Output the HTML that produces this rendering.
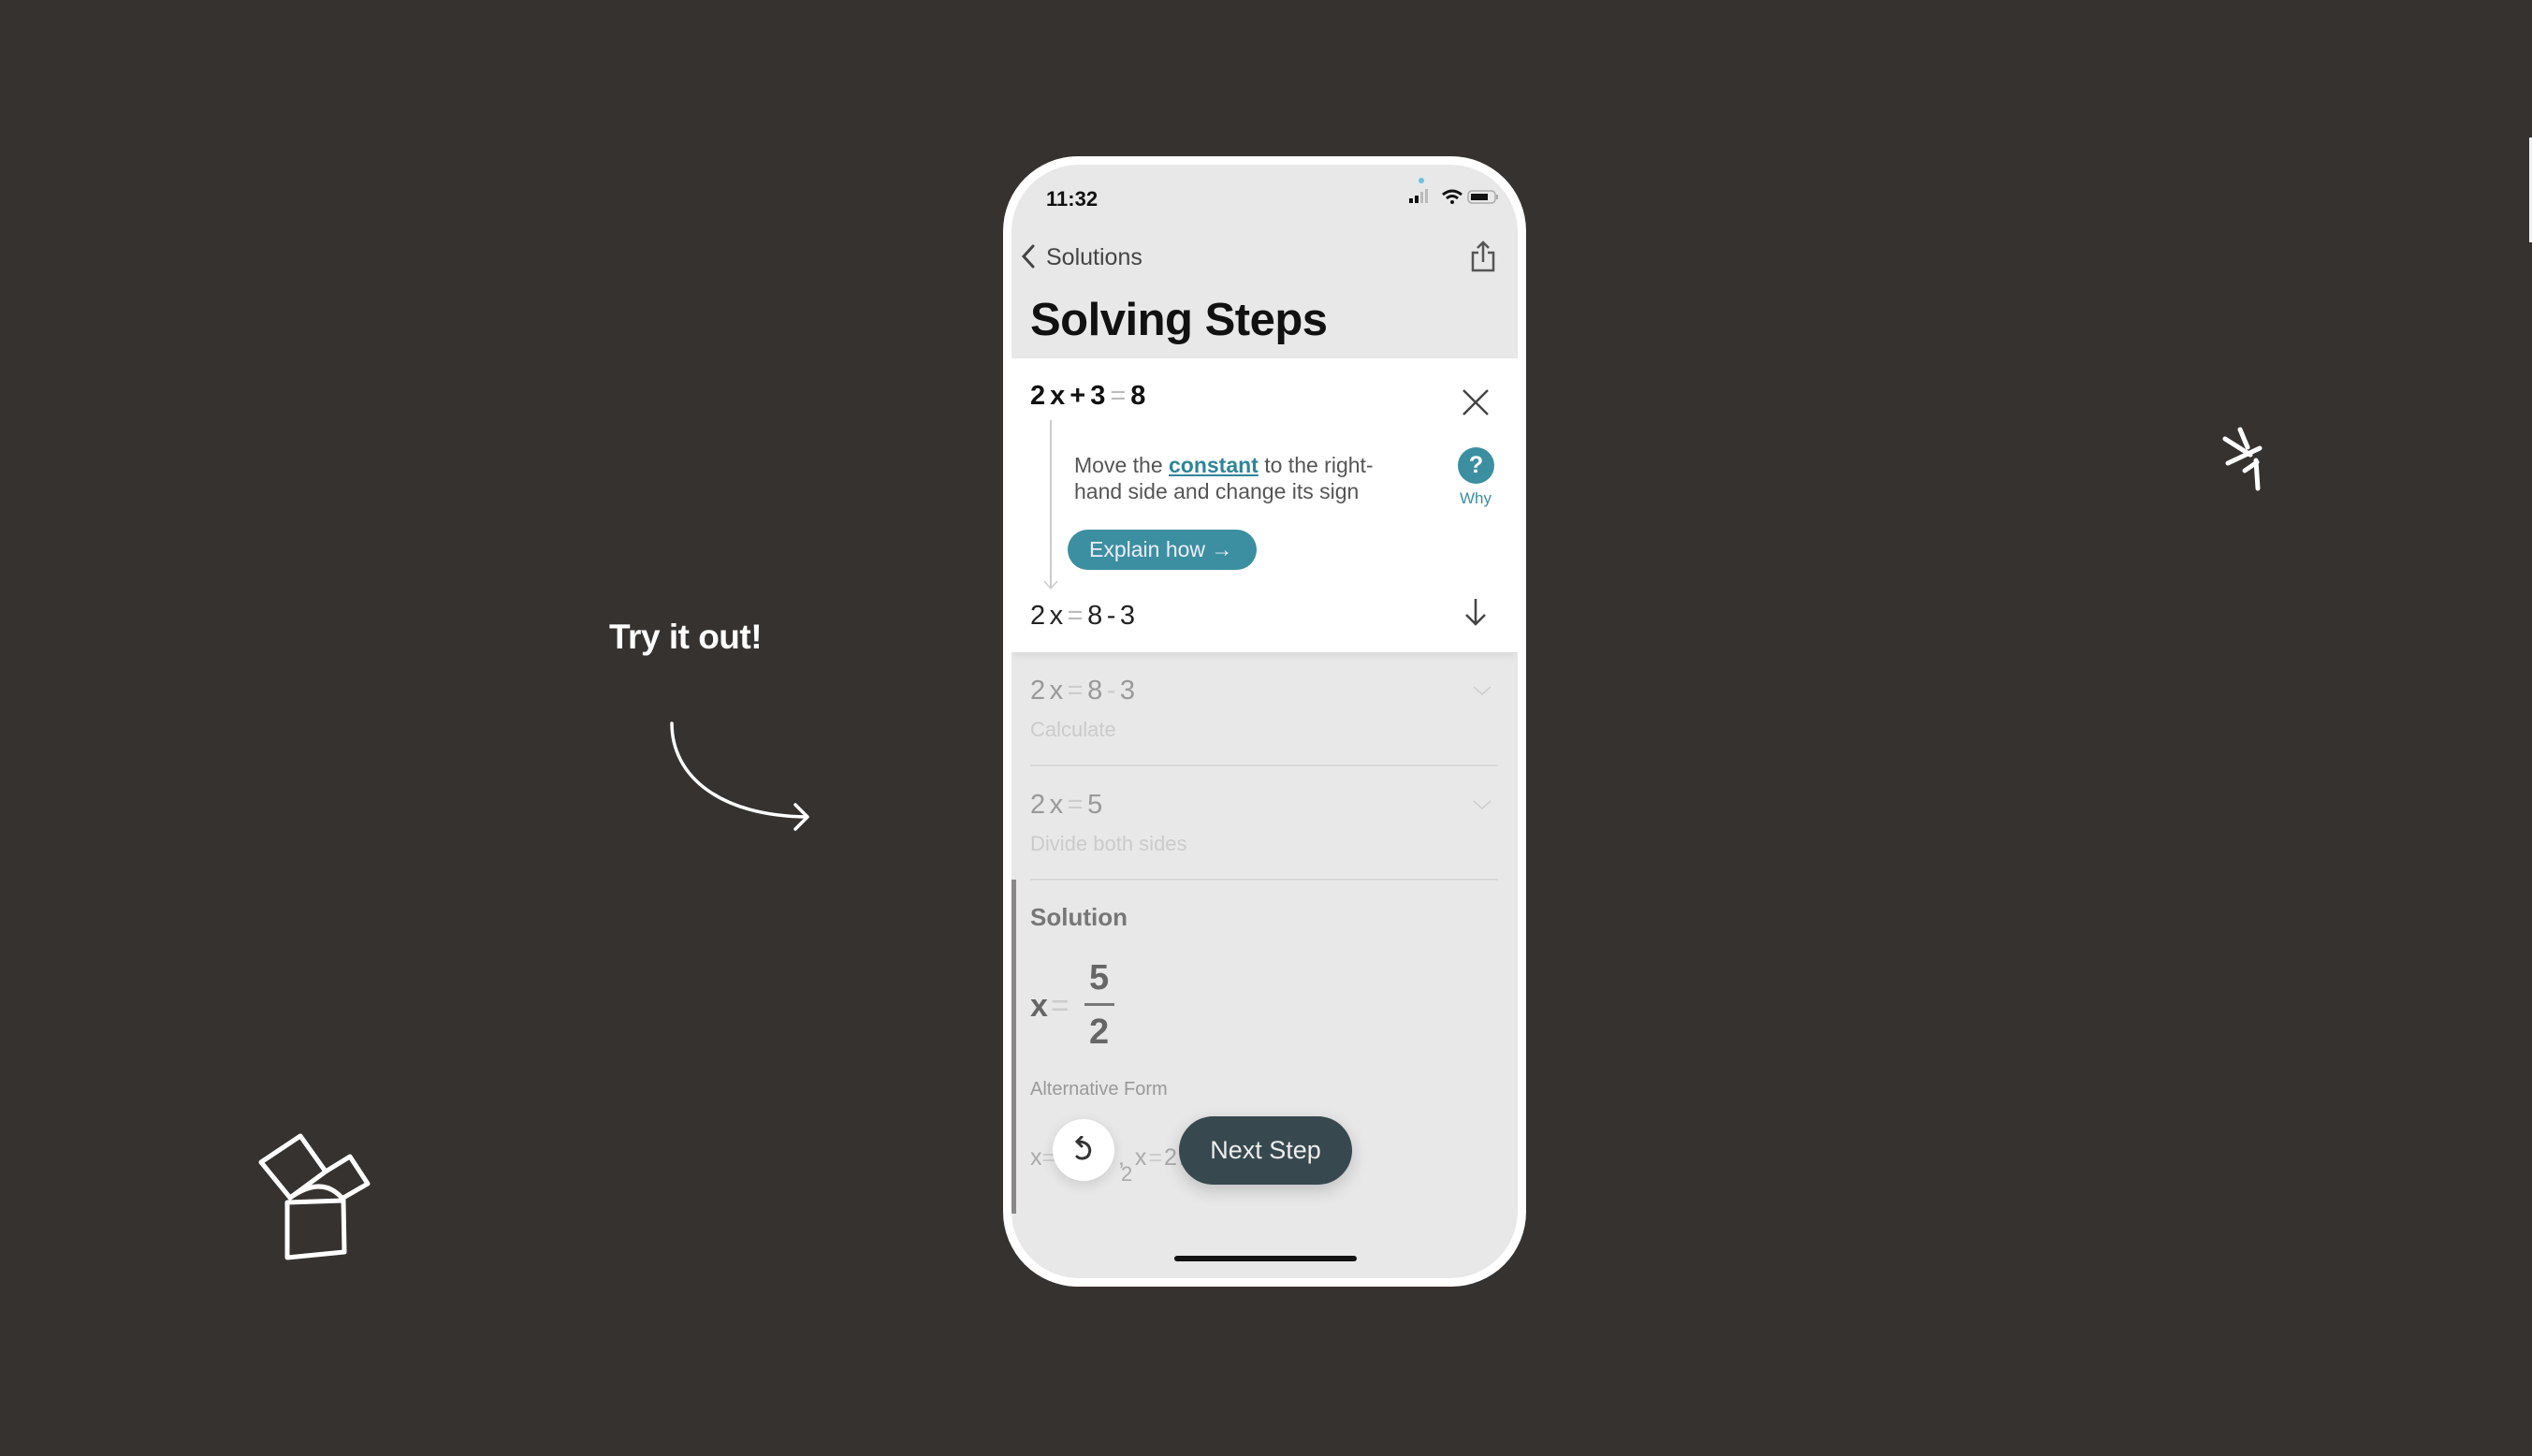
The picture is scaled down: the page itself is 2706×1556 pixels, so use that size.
<!DOCTYPE html>
<html><head><meta charset="utf-8">
<style>
*{margin:0;padding:0;box-sizing:border-box}
html,body{width:2706px;height:1556px;overflow:hidden;background:#353230;font-family:"Liberation Sans",sans-serif}
.abs{position:absolute}
#phone{position:absolute;left:1072px;top:167px;width:559px;height:1208px;background:#fff;border-radius:80px;}
#screen{position:absolute;left:9px;top:9px;width:541px;height:1190px;background:#e8e8e8;border-radius:72px;overflow:hidden}
.t{position:absolute;white-space:nowrap}
</style></head><body>

<div class="t" style="left:651px;top:660px;font-size:37px;font-weight:bold;color:#fff;letter-spacing:-0.5px">Try it out!</div>
<svg class="abs" style="left:0;top:0" width="2706" height="1556">
 <g fill="none" stroke="#fff" stroke-linecap="round" stroke-linejoin="round">
  <path d="M718 773 C718 830 770 872 862 873" stroke-width="3.5"/>
  <path d="M850 860 L863 873 L850 886" stroke-width="3.5"/>
  <g stroke-width="5">
   <path d="M307 1285 L367 1283 L368 1338 L307 1344 Z"/>
   <path d="M279 1242 L321 1214 L348 1252 L310 1280 Z"/>
   <path d="M348 1252 L374 1236 L393 1265 L367 1280"/>
   <path d="M310 1280 Q345 1255 367 1282"/>
   <path d="M378 469 L405 486 M394 459 L402 478 M381 495 L415 479 M399 503 L412 494 M411 492 L413 522" transform="translate(2000,0)"/>
  </g>
 </g>
 <rect x="2703" y="147" width="3" height="112" fill="#f2f2f2"/>
</svg>

<div id="phone"><div id="screen">
 <div class="t" style="left:37px;top:24px;font-size:22px;font-weight:bold;color:#111">11:32</div>
 <div class="abs" style="left:435px;top:14px;width:6px;height:6px;border-radius:3px;background:#6cc4dc"></div>
 <svg class="abs" style="left:420px;top:26px" width="105" height="22">
  <rect x="5" y="10" width="4" height="5" fill="#111"/><rect x="11" y="7" width="4" height="8" fill="#111"/><rect x="17" y="3" width="3" height="12" fill="#bbb"/><rect x="22" y="0" width="3" height="15" fill="#bbb"/>
  <path d="M41 6 Q51 -2 61 6" stroke="#111" stroke-width="3" fill="none"/><path d="M45 10 Q51 5 57 10" stroke="#111" stroke-width="3" fill="none"/><circle cx="51" cy="14" r="2" fill="#111"/>
  <rect x="68" y="2" width="29" height="13" rx="4" fill="none" stroke="#aaa" stroke-width="1.5"/><rect x="71" y="5" width="18" height="7" fill="#111"/><rect x="98" y="6" width="2" height="5" fill="#aaa"/>
 </svg>
 <svg class="abs" style="left:8px;top:84px" width="20" height="30"><path d="M15 3 L5 14 L15 25" stroke="#444" stroke-width="3" fill="none" stroke-linecap="round"/></svg>
 <div class="t" style="left:37px;top:85px;font-size:25px;color:#444">Solutions</div>
 <svg class="abs" style="left:490px;top:80px" width="28" height="36"><g stroke="#555" stroke-width="2.5" fill="none"><path d="M9 14 H3 V33 H25 V14 H19"/><path d="M14 24 V3 M8 9 L14 3 L20 9"/></g></svg>
 <div class="t" style="left:20px;top:138px;font-size:49px;font-weight:bold;color:#111;letter-spacing:-0.5px">Solving Steps</div>

 <div class="abs" style="left:0;top:207px;width:541px;height:314px;background:#fff;box-shadow:0 4px 8px rgba(0,0,0,0.06)">
  <div class="t" style="left:20px;top:24px;font-size:29px;font-weight:bold;color:#111;letter-spacing:5px">2x+3<span style="color:#bbb;font-weight:normal">=</span>8</div>
  <svg class="abs" style="left:480px;top:31px" width="32" height="32"><path d="M3 3 L29 29 M29 3 L3 29" stroke="#444" stroke-width="2.5"/></svg>
  <div class="abs" style="left:41px;top:66px;width:1.5px;height:180px;background:#ccc"></div>
  <svg class="abs" style="left:33px;top:236px" width="18" height="14"><path d="M2 2 L9 10 L16 2" stroke="#ccc" stroke-width="1.5" fill="none"/></svg>
  <div class="t" style="left:67px;top:100px;font-size:23px;line-height:28px;color:#555">Move the <span style="color:#2f8599;font-weight:bold;text-decoration:underline">constant</span> to the right-<br>hand side and change its sign</div>
  <div class="abs" style="left:477px;top:95px;width:39px;height:39px;border-radius:20px;background:#3b8fa0;color:#fff;font-weight:bold;font-size:25px;text-align:center;line-height:39px">?</div>
  <div class="t" style="left:479px;top:140px;font-size:17px;color:#3b8fa0">Why</div>
  <div class="abs" style="left:60px;top:183px;width:202px;height:43px;border-radius:22px;background:#3b8fa0;color:#eef;font-size:23px;line-height:43px;padding-left:23px">Explain how &#8594;</div>
  <div class="t" style="left:20px;top:259px;font-size:29px;color:#222;letter-spacing:4.5px">2x<span style="color:#bbb">=</span>8-3</div>
  <svg class="abs" style="left:483px;top:255px" width="26" height="32"><path d="M13 2 V29 M3 19 L13 29 L23 19" stroke="#444" stroke-width="2.5" fill="none"/></svg>
 </div>

 <div class="t" style="left:20px;top:546px;font-size:29px;color:#999;letter-spacing:4.5px">2x<span style="color:#ccc">=</span>8<span style="color:#ccc">-</span>3</div>
 <div class="t" style="left:20px;top:591px;font-size:22px;color:#cbcbcb">Calculate</div>
 <svg class="abs" style="left:492px;top:556px" width="22" height="14"><path d="M2 2 L11 10 L20 2" stroke="#ccc" stroke-width="1.5" fill="none"/></svg>
 <div class="abs" style="left:20px;top:641px;width:500px;height:1.5px;background:#d8d8d8"></div>
 <div class="t" style="left:20px;top:668px;font-size:29px;color:#999;letter-spacing:4.5px">2x<span style="color:#ccc">=</span>5</div>
 <div class="t" style="left:20px;top:713px;font-size:22px;color:#cbcbcb">Divide both sides</div>
 <svg class="abs" style="left:492px;top:678px" width="22" height="14"><path d="M2 2 L11 10 L20 2" stroke="#ccc" stroke-width="1.5" fill="none"/></svg>
 <div class="abs" style="left:20px;top:763px;width:500px;height:1.5px;background:#d8d8d8"></div>
 <div class="abs" style="left:0;top:764px;width:5px;height:357px;background:#8a8886"></div>
 <div class="t" style="left:20px;top:789px;font-size:26px;font-weight:bold;color:#777">Solution</div>
 <div class="t" style="left:20px;top:880px;font-size:34px;font-weight:bold;color:#666;letter-spacing:3px">x<span style="color:#ccc;font-weight:normal">=</span></div>
 <div class="t" style="left:83px;top:848px;font-size:38px;font-weight:bold;color:#666">5</div>
 <div class="abs" style="left:78px;top:896px;width:32px;height:3px;background:#777"></div>
 <div class="t" style="left:83px;top:906px;font-size:38px;font-weight:bold;color:#666">2</div>
 <div class="t" style="left:20px;top:977px;font-size:20px;color:#999">Alternative Form</div>
 <div class="t" style="left:20px;top:1047px;font-size:25px;color:#aaa">x<span style="color:#ccc">=</span></div>
 <div class="t" style="left:117px;top:1066px;font-size:22px;color:#aaa">2</div>
 <div class="t" style="left:114px;top:1047px;font-size:25px;color:#aaa;letter-spacing:2px">, x<span style="color:#ccc">=</span>2.</div>
 <div class="abs" style="left:44px;top:1020px;width:66px;height:66px;border-radius:33px;background:#fff;box-shadow:0 4px 14px rgba(0,0,0,0.12)"></div>
 <svg class="abs" style="left:63px;top:1038px" width="28" height="30"><g stroke="#333" stroke-width="3" fill="none" stroke-linecap="round"><path d="M8 6 C20 6 22 14 20 19 C18 25 10 25 7 22"/><path d="M12 1 L7 6 L12 11"/></g></svg>
 <div class="abs" style="left:179px;top:1017px;width:185px;height:73px;border-radius:37px;background:#37494f;color:#eee;font-size:27px;line-height:73px;text-align:center;box-shadow:0 6px 18px rgba(0,0,0,0.18)">Next Step</div>
 <div class="abs" style="left:174px;top:1166px;width:195px;height:6px;border-radius:3px;background:#111"></div>
</div></div>
</body></html>
